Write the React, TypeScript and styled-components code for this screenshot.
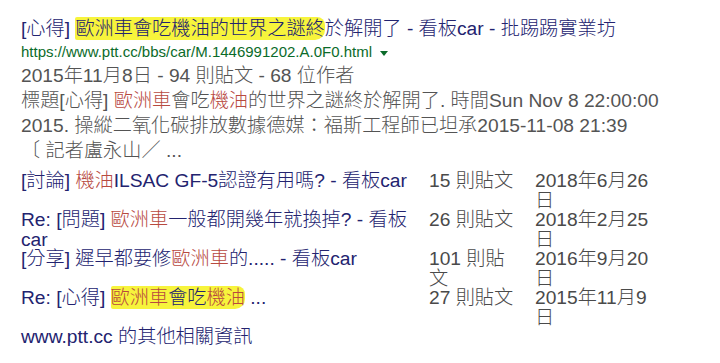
import React from "react";
import styled, { createGlobalStyle } from "styled-components";

const GlobalStyle = createGlobalStyle`
  html, body {
    margin: 0;
    padding: 0;
    background: #ffffff;
  }
  body {
    font-family: "Liberation Sans", Arial, "Noto Sans CJK TC", sans-serif;
    font-weight: 300;
  }
`;

const NAVY = "#23236f";
const GRAY = "#545454";
const RED = "#b84a3f";

const Page = styled.div`
  padding: 17px 0 0 21px;
`;

const ResultTitle = styled.div`
  font-size: 19.2px;
  line-height: 24px;
  color: ${NAVY};
  white-space: nowrap;
`;

const Marker = styled.span`
  background: #f7f43c;
  padding: 1px 0;
  border-radius: 2px 8px 10px 2px;
`;

const UrlLine = styled.div`
  font-size: 15px;
  line-height: 22px;
  color: #0b6b2a;
  white-space: nowrap;
`;

const Arrow = styled.span`
  display: inline-block;
  width: 0;
  height: 0;
  border-left: 4px solid transparent;
  border-right: 4px solid transparent;
  border-top: 5px solid #0b6b2a;
  margin-left: 8px;
  vertical-align: middle;
`;

const Snippet = styled.div`
  font-size: 19.2px;
  line-height: 25px;
  color: ${GRAY};
  white-space: nowrap;
`;

const Em = styled.span`
  color: ${RED};
`;

const Table = styled.div`
  margin-top: 8px;
  font-size: 19.2px;
  line-height: 19.5px;
`;

const Row = styled.div`
  display: grid;
  grid-template-columns: 408px 106px 120px;
  align-items: start;
`;

const TitleCell = styled.div`
  color: ${NAVY};
  padding-right: 12px;
`;

const CountCell = styled.div`
  color: #4a4a4a;
  padding-right: 17px;
`;

const DateCell = styled.div`
  color: #4a4a4a;
`;

const Footer = styled.div`
  font-size: 19.2px;
  line-height: 18px;
  margin-top: 1px;
  color: ${NAVY};
`;

type RowData = {
  title: React.ReactNode;
  count: string;
  date: string;
};

const rows: RowData[] = [
  {
    title: (
      <>
        [討論] <Em>機油</Em>ILSAC GF-5認證有用嗎? - 看板car
      </>
    ),
    count: "15 則貼文",
    date: "2018年6月26日",
  },
  {
    title: (
      <>
        Re: [問題] <Em>歐洲車</Em>一般都開幾年就換掉? - 看板car
      </>
    ),
    count: "26 則貼文",
    date: "2018年2月25日",
  },
  {
    title: (
      <>
        [分享] 遲早都要修<Em>歐洲車</Em>的..... - 看板car
      </>
    ),
    count: "101 則貼文",
    date: "2016年9月20日",
  },
  {
    title: (
      <>
        Re: [心得]{" "}
        <Marker>
          <Em>歐洲車</Em>會吃<Em>機油</Em>
        </Marker>{" "}
        ...
      </>
    ),
    count: "27 則貼文",
    date: "2015年11月9日",
  },
];

export default function App() {
  return (
    <>
      <GlobalStyle />
      <Page>
        <ResultTitle>
          [心得] <Marker>歐洲車會吃機油的世界之謎終</Marker>於解開了 - 看板car - 批踢踢實業坊
        </ResultTitle>
        <UrlLine>
          https://www.ptt.cc/bbs/car/M.1446991202.A.0F0.html
          <Arrow />
        </UrlLine>
        <Snippet>
          2015年11月8日 - 94 則貼文 - 68 位作者
          <br />
          標題[心得] <Em>歐洲車</Em>會吃<Em>機油</Em>的世界之謎終於解開了. 時間Sun Nov 8 22:00:00
          <br />
          2015. 操縱二氧化碳排放數據德媒：福斯工程師已坦承2015-11-08 21:39
          <br />
          〔 記者盧永山／ ...
        </Snippet>
        <Table>
          {rows.map((r, i) => (
            <Row key={i}>
              <TitleCell>{r.title}</TitleCell>
              <CountCell>{r.count}</CountCell>
              <DateCell>{r.date}</DateCell>
            </Row>
          ))}
        </Table>
        <Footer>www.ptt.cc 的其他相關資訊</Footer>
      </Page>
    </>
  );
}
